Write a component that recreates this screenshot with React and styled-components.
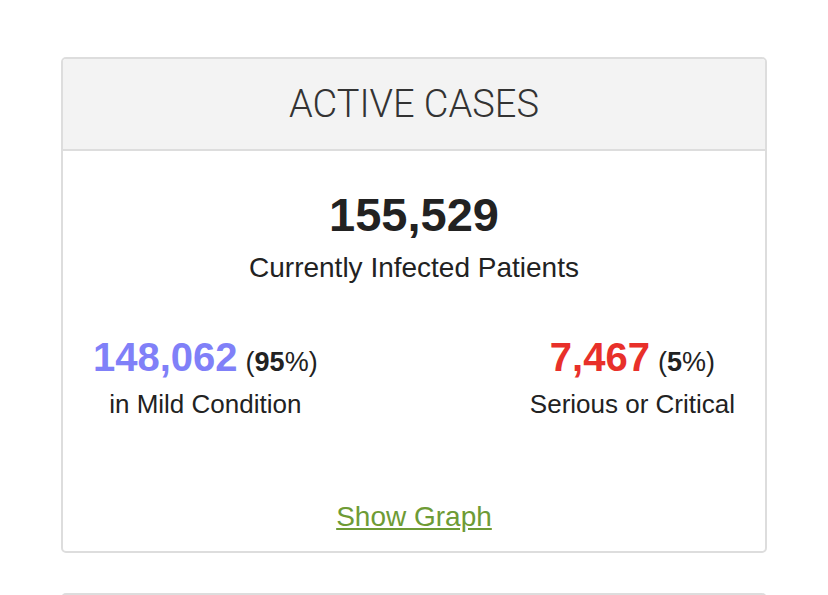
import React from "react"
import styled, { createGlobalStyle } from "styled-components"

const Global = createGlobalStyle`
    body {
        margin: 0;
        background: #fff;
        font-family: "Liberation Sans", Arial, sans-serif;
        color: #222;
    }
`

const Page = styled.div`
    padding: 57px 61px 0 61px;
    display: flex;
    flex-direction: column;
    gap: 40px;
    height: 595px;
    box-sizing: border-box;
    overflow: hidden;
`

const Panel = styled.div`
    border: 2px solid #ddd;
    border-radius: 5px;
    background: #fff;
    overflow: hidden;
    flex-shrink: 0;
    min-height: ${props => props.stub ? "60px" : "0"};
`

const PanelHeading = styled.div`
    background: #f3f3f3;
    border-bottom: 2px solid #ddd;
    height: 90px;
    display: flex;
    align-items: center;
    justify-content: center;
    font-family: Roboto, "Liberation Sans", sans-serif;
    font-weight: 300;
    font-size: 38px;
    color: #333;
`

const PanelBody = styled.div`
    padding: 34px 30px 17px 30px;
    text-align: center;
`

const Total = styled.div`
    font-size: 47px;
    font-weight: bold;
    color: #222;
    line-height: 60px;
`

const Caption = styled.div`
    font-size: ${props => props.small ? "26px" : "28px"};
    line-height: 46px;
    color: #222;
`

const Split = styled.div`
    display: flex;
    justify-content: space-between;
    margin-top: 42px;
`

const Part = styled.div`
    text-align: center;
`

const FigureLine = styled.div`
    display: flex;
    justify-content: center;
    align-items: baseline;
    gap: 8px;
    height: 48px;
    line-height: 48px;
`

const Figure = styled.span`
    font-size: 40px;
    font-weight: bold;
    color: ${props => props.tone};
`

const Share = styled.span`
    font-size: 27px;
    color: #222;
    b { font-weight: bold; }
`

const GraphLink = styled.a`
    display: inline-block;
    margin-top: 73px;
    font-size: 28px;
    line-height: 34px;
    color: #6e9b35;
    text-decoration: underline;
`

export default function App() {
    return <>
        <Global />
        <Page>
            <Panel>
                <PanelHeading>ACTIVE CASES</PanelHeading>
                <PanelBody>
                    <Total>155,529</Total>
                    <Caption>Currently Infected Patients</Caption>
                    <Split>
                        <Part>
                            <FigureLine>
                                <Figure tone="#8080f8">148,062</Figure>
                                <Share>(<b>95</b>%)</Share>
                            </FigureLine>
                            <Caption small>in Mild Condition</Caption>
                        </Part>
                        <Part>
                            <FigureLine>
                                <Figure tone="#e8302a">7,467</Figure>
                                <Share>(<b>5</b>%)</Share>
                            </FigureLine>
                            <Caption small>Serious or Critical</Caption>
                        </Part>
                    </Split>
                    <GraphLink href="#">Show Graph</GraphLink>
                </PanelBody>
            </Panel>
            <Panel stub />
        </Page>
    </>
}
